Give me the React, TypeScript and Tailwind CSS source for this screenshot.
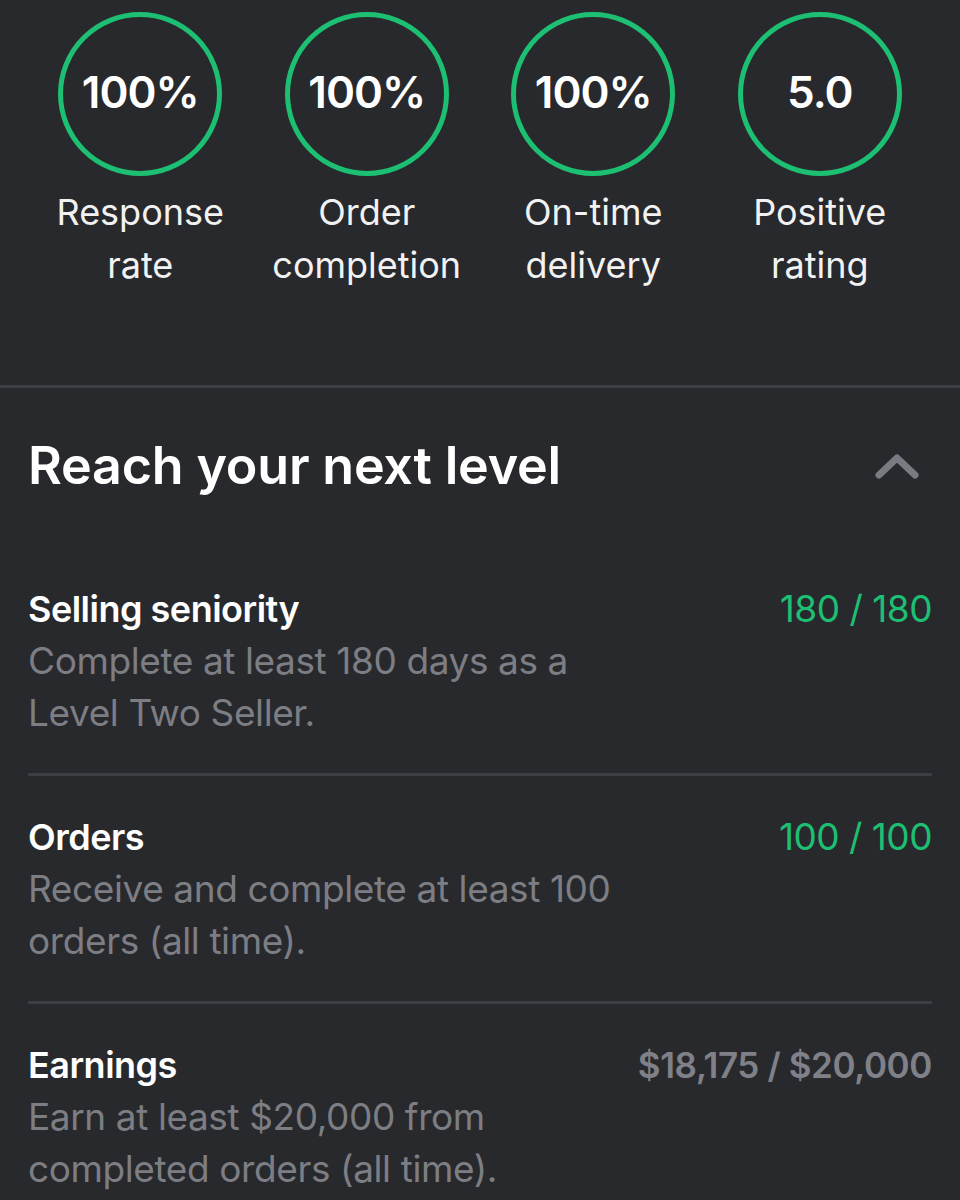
const stats = [
  { value: '100%', label: ['Response', 'rate'] },
  { value: '100%', label: ['Order', 'completion'] },
  { value: '100%', label: ['On-time', 'delivery'] },
  { value: '5.0', label: ['Positive', 'rating'] },
];

const goals = [
  {
    title: 'Selling seniority',
    desc: 'Complete at least 180 days as a Level Two Seller.',
    progress: '180 / 180',
    done: true,
  },
  {
    title: 'Orders',
    desc: 'Receive and complete at least 100 orders (all time).',
    progress: '100 / 100',
    done: true,
  },
  {
    title: 'Earnings',
    desc: 'Earn at least $20,000 from completed orders (all time).',
    progress: '$18,175 / $20,000',
    done: false,
  },
];

export default function App() {
  return (
    <div
      className="h-[1200px] w-[960px] overflow-hidden bg-[#28292d] text-white"
      style={{ fontFamily: 'Inter, "Noto Sans", sans-serif' }}
    >
      <div className="grid grid-cols-4 px-[27px] pt-3">
        {stats.map((s) => (
          <div key={s.label[0]} className="flex flex-col items-center">
            <div className="flex h-[164px] w-[164px] items-center justify-center rounded-full border-[5px] border-[#1dbf73]">
              <span className="mb-1 text-[44px] font-semibold tracking-[-1px]">{s.value}</span>
            </div>
            <div className="mt-[10px] text-center text-[36px] leading-[53px] text-[#f2f2f3]">
              {s.label[0]}
              <br />
              {s.label[1]}
            </div>
          </div>
        ))}
      </div>

      <div className="mt-[93px] h-[3px] bg-[#3d3e43]" />

      <div className="px-7">
        <div className="flex items-center justify-between pt-[48px]">
          <h2 className="text-[52px] font-semibold leading-[60px] tracking-[-0.2px]">Reach your next level</h2>
          <svg width="46" height="30" viewBox="0 0 46 30" className="mr-[12px]">
            <path
              d="M5 24 L23 7 L41 24"
              fill="none"
              stroke="#7a7b82"
              strokeWidth="7"
              strokeLinecap="round"
              strokeLinejoin="round"
            />
          </svg>
        </div>

        <div className="mt-[87px]">
          {goals.map((g, i) => (
            <div
              key={g.title}
              className={
                i < goals.length - 1
                  ? 'mb-[35px] flex justify-between border-b-[3px] border-[#3d3e43] pb-[34px]'
                  : 'flex justify-between'
              }
            >
              <div className="min-w-0 max-w-[615px] flex-1">
                <div className="text-[36px] font-semibold leading-[52px] tracking-[-0.5px]">{g.title}</div>
                <div className="text-[37px] leading-[52px] tracking-[-0.4px] text-[#7d7e84]">{g.desc}</div>
              </div>
              <div
                className={
                  g.done
                    ? 'shrink-0 whitespace-nowrap text-[37px] leading-[52px] tracking-[-0.5px] text-[#1dbf73]'
                    : 'shrink-0 whitespace-nowrap text-[35px] font-semibold leading-[52px] tracking-[-0.4px] text-[#808188]'
                }
              >
                {g.progress}
              </div>
            </div>
          ))}
        </div>
      </div>
    </div>
  );
}
